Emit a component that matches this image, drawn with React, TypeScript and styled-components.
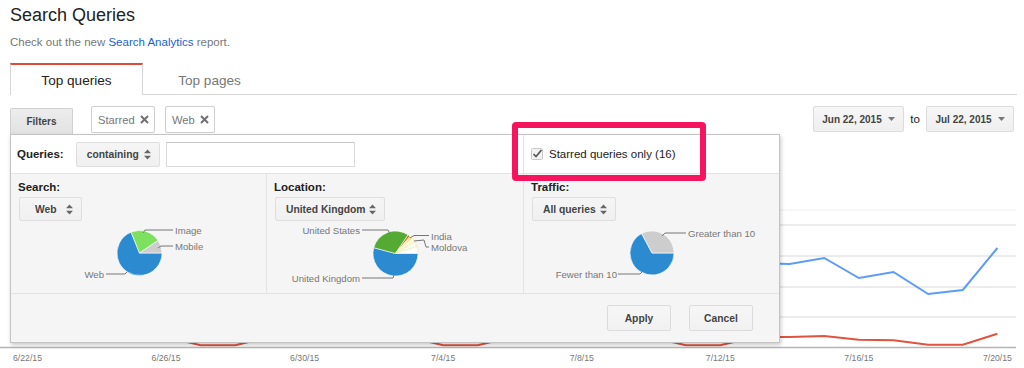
import React from "react";
import styled, { createGlobalStyle } from "styled-components";

const GlobalStyle = createGlobalStyle`
  body {
    margin: 0;
    background: #fff;
    font-family: "Liberation Sans", Arial, sans-serif;
    color: #222;
  }
`;

type Slice = { from: number; to: number; fill: string; stroke?: string };
type Callout = { points: string; text: string; x: number; y: number; anchor?: "start" | "end" };
type PieSpec = { cx: number; cy: number; r: number; slices: Slice[]; callouts: Callout[] };

// angles are degrees clockwise from 12 o'clock
const slicePath = (cx: number, cy: number, r: number, a0: number, a1: number) => {
  const pt = (a: number) => [cx + r * Math.sin((a * Math.PI) / 180), cy - r * Math.cos((a * Math.PI) / 180)];
  let sweep = a1 - a0;
  if (sweep < 0) sweep += 360;
  const [x0, y0] = pt(a0);
  const [x1, y1] = pt(a1);
  return `M${cx} ${cy} L${x0} ${y0} A${r} ${r} 0 ${sweep > 180 ? 1 : 0} 1 ${x1} ${y1} Z`;
};

const BLUE = "#2c8ad1";

const searchPie: PieSpec = {
  cx: 139.5,
  cy: 253,
  r: 22.5,
  slices: [
    { from: 90, to: 338, fill: BLUE },
    { from: 338, to: 56, fill: "#7de05f" },
    { from: 56, to: 90, fill: "#cdcdcd" },
  ],
  callouts: [
    { points: "143,233 145,230 173,230", text: "Image", x: 175, y: 233.5 },
    { points: "158,248 161,246 173,246", text: "Mobile", x: 175, y: 249.5 },
    { points: "106,274 125,274 127,272", text: "Web", x: 104, y: 277.5, anchor: "end" },
  ],
};

const locationPie: PieSpec = {
  cx: 395.5,
  cy: 253.5,
  r: 22.5,
  slices: [
    { from: 90, to: 285, fill: BLUE },
    { from: 285, to: 34, fill: "#55aa33" },
    { from: 34, to: 40, fill: "#b4761b" },
    { from: 40, to: 43, fill: "#e3a32c" },
    { from: 43, to: 47, fill: "#f5dc72" },
    { from: 47, to: 58, fill: "#fffbe3", stroke: "#f1e6a6" },
    { from: 58, to: 72, fill: "#fdfdf6", stroke: "#f1e6a6" },
    { from: 72, to: 90, fill: "#ffffff", stroke: "#f1e6a6" },
  ],
  callouts: [
    { points: "362,230 388,230 390,234", text: "United States", x: 360, y: 233.5, anchor: "end" },
    { points: "410,238 414,235.5 429,235.5", text: "India", x: 431, y: 239.5 },
    { points: "414,241 424,240 426,247 429,247", text: "Moldova", x: 431, y: 250.5 },
    { points: "362,278 393,278 394,275", text: "United Kingdom", x: 360, y: 281.5, anchor: "end" },
  ],
};

const trafficPie: PieSpec = {
  cx: 652,
  cy: 253,
  r: 22,
  slices: [
    { from: 90, to: 332, fill: BLUE },
    { from: 332, to: 90, fill: "#cdcdcd" },
  ],
  callouts: [
    { points: "662,236 665,233 686,233", text: "Greater than 10", x: 688, y: 236.5 },
    { points: "618,274 640,274 642,272", text: "Fewer than 10", x: 617, y: 277.5, anchor: "end" },
  ],
};

const sections = [
  { label: "Search:", value: "Web", width: 63, left: 11, colWidth: 255, pie: searchPie },
  { label: "Location:", value: "United Kingdom", width: 110, left: 267, colWidth: 256, pie: locationPie },
  { label: "Traffic:", value: "All queries", width: 84, left: 524, colWidth: 255, pie: trafficPie },
];

// chart data, one value per day from 6/22 to 7/20
const clicks = [268, 264, 259, 262, 256, 291, 294, 267, 261, 258, 264, 262, 289, 292, 263, 259, 256, 261, 265, 293, 290, 262, 263, 257, 277, 271, 293, 289, 247];
const impressions = [336, 335, 336, 337, 336, 344.2, 344.2, 336, 335, 336, 337, 336, 344.2, 344.2, 336, 335, 336, 337, 336, 344.2, 344.2, 336, 336, 335, 338.7, 339.3, 343.7, 343.7, 332.7];
const dayX = (i: number) => 27.5 + i * 34.64;
const dateLabels = ["6/22/15", "6/26/15", "6/30/15", "7/4/15", "7/8/15", "7/12/15", "7/16/15", "7/20/15"];

const Page = styled.div`
  position: relative;
  width: 1024px;
  height: 368px;
  overflow: hidden;
  box-sizing: border-box;
  padding: 4px 10px 0 10px;
`;

const Title = styled.h1`
  margin: 0;
  font-size: 18px;
  line-height: 22px;
  font-weight: normal;
  color: #222;
`;

const Intro = styled.p`
  margin: 9px 0 0;
  font-size: 11.5px;
  line-height: 14px;
  color: #777;

  a {
    color: #1a5fd0;
    text-decoration: none;
  }
`;

const TabBar = styled.div`
  display: flex;
  margin-top: 14px;
  width: 1007px;
  height: 31px;
  border-bottom: 1px solid #d6d6d6;
`;

const Tab = styled.div<{ $active?: boolean }>`
  box-sizing: border-box;
  width: 133px;
  height: ${({ $active }) => ($active ? "32px" : "31px")};
  display: flex;
  align-items: center;
  justify-content: center;
  font-size: 13.6px;
  color: ${({ $active }) => ($active ? "#222" : "#777")};
  background: #fff;
  border: 1px solid ${({ $active }) => ($active ? "#d6d6d6" : "transparent")};
  border-top: 2px solid ${({ $active }) => ($active ? "#dd4b39" : "transparent")};
  border-bottom: none;
  padding-top: 1px;
`;

const Toolbar = styled.div`
  display: flex;
  align-items: flex-start;
  margin-top: 11px;
  width: 1004px;
`;

const FilterButton = styled.div`
  box-sizing: border-box;
  width: 63px;
  height: 26px;
  margin-top: 2px;
  display: flex;
  align-items: center;
  justify-content: center;
  font-size: 10px;
  font-weight: bold;
  color: #444;
  background: linear-gradient(#ededed, #e2e2e2);
  border: 1px solid #d0d0d0;
  border-bottom: none;
  border-radius: 2px 2px 0 0;
`;

const Chip = styled.div<{ $width: number; $gap: number }>`
  box-sizing: border-box;
  width: ${({ $width }) => $width}px;
  height: 27px;
  margin-left: ${({ $gap }) => $gap}px;
  display: flex;
  align-items: center;
  gap: 5px;
  padding-left: 6px;
  font-size: 11.2px;
  color: #777;
  background: #fff;
  border: 1px solid #cfcfcf;
  border-radius: 2px;
`;

const DateGroup = styled.div`
  margin-left: auto;
  display: flex;
  align-items: center;
`;

const DateButton = styled.div<{ $width: number }>`
  box-sizing: border-box;
  width: ${({ $width }) => $width}px;
  height: 26px;
  display: flex;
  align-items: center;
  justify-content: center;
  gap: 6px;
  font-size: 10px;
  font-weight: bold;
  color: #444;
  background: linear-gradient(#f6f6f6, #efefef);
  border: 1px solid #dcdcdc;
  border-radius: 2px;
`;

const ToText = styled.span`
  width: 22px;
  text-align: center;
  font-size: 11.5px;
  color: #222;
`;

const Chart = styled.svg`
  display: block;
  margin: 0 0 0 -10px;
`;

const FilterPanel = styled.div`
  position: absolute;
  left: 10px;
  top: 134px;
  width: 770px;
  height: 209px;
  box-sizing: border-box;
  display: flex;
  flex-direction: column;
  background: #f5f5f5;
  border: 1px solid #c4c4c4;
  box-shadow: 1px 2px 4px rgba(0, 0, 0, 0.22);
`;

const QueriesRow = styled.div`
  height: 38px;
  display: flex;
  background: #fff;
  border-bottom: 1px solid #e3e3e3;
`;

const QueriesLeft = styled.div`
  box-sizing: border-box;
  width: 513px;
  display: flex;
  align-items: center;
  padding-left: 6px;
  border-right: 1px solid #e3e3e3;
`;

const QueriesRight = styled.div`
  display: flex;
  align-items: center;
  gap: 6px;
  padding-left: 7px;
  font-size: 11.5px;
  color: #222;
`;

const FieldLabel = styled.div<{ $indent?: number }>`
  font-size: 11.5px;
  line-height: 14px;
  font-weight: bold;
  color: #222;
  margin-left: ${({ $indent }) => $indent ?? 0}px;
`;

const Select = styled.div<{ $width: number; $indent?: number }>`
  box-sizing: border-box;
  width: ${({ $width }) => $width}px;
  height: 25px;
  margin-left: ${({ $indent }) => $indent ?? 0}px;
  display: flex;
  align-items: center;
  justify-content: space-between;
  padding: 0 8px 0 10px;
  font-size: 10.3px;
  font-weight: bold;
  color: #444;
  background: linear-gradient(#f5f5f5, #f0f0f0);
  border: 1px solid #dedede;
  border-radius: 2px;
`;

const TextInput = styled.div`
  box-sizing: border-box;
  width: 189px;
  height: 25px;
  margin-left: 6px;
  background: #fff;
  border: 1px solid #d9d9d9;
  border-top-color: #c6c6c6;
`;

const SectionRow = styled.div`
  height: 119px;
  display: grid;
  grid-template-columns: 256px 257px 1fr;
  border-bottom: 1px solid #e3e3e3;
`;

const Section = styled.div`
  box-sizing: border-box;
  padding-top: 6px;
  border-right: 1px solid #e3e3e3;
  display: flex;
  flex-direction: column;
  align-items: flex-start;

  &:last-child {
    border-right: none;
  }
`;

const SectionSelect = styled(Select)<{ $pad: number }>`
  margin-top: 3px;
  height: 24px;
  padding-left: ${({ $pad }) => $pad}px;
`;

const PieSvg = styled.svg`
  display: block;
  margin-top: 1px;
`;

const Footer = styled.div`
  flex: 1;
  display: flex;
  align-items: center;
  justify-content: flex-end;
  gap: 18px;
  padding-right: 26px;
`;

const ActionButton = styled.div`
  box-sizing: border-box;
  width: 64px;
  height: 26px;
  display: flex;
  align-items: center;
  justify-content: center;
  font-size: 10.3px;
  font-weight: bold;
  color: #444;
  background: linear-gradient(#f6f6f6, #f1f1f1);
  border: 1px solid #dcdcdc;
  border-radius: 2px;
`;

const Highlight = styled.div`
  position: absolute;
  left: 512px;
  top: 122px;
  width: 194px;
  height: 59px;
  box-sizing: border-box;
  border: 6px solid #f7145e;
  border-radius: 4px;
`;

const UpDown = () => (
  <svg width="7" height="11" viewBox="0 0 7 11">
    <path d="M0 4.2 L3.5 0.5 L7 4.2 Z M0 6.8 L3.5 10.5 L7 6.8 Z" fill="#666" />
  </svg>
);

const Caret = () => (
  <svg width="7" height="4" viewBox="0 0 7 4">
    <path d="M0 0 L7 0 L3.5 4 Z" fill="#777" />
  </svg>
);

const Cross = () => (
  <svg width="9" height="9" viewBox="0 0 9 9">
    <path d="M1 1 L8 8 M8 1 L1 8" stroke="#707070" strokeWidth="2" />
  </svg>
);

const CheckBox = () => (
  <svg width="12" height="12" viewBox="0 0 12 12">
    <rect x="0.5" y="0.5" width="11" height="11" rx="1" fill="#f3f3f3" stroke="#c8c8c8" />
    <path d="M2.5 6 L5 8.6 L10.5 2" fill="none" stroke="#555" strokeWidth="1.6" />
  </svg>
);

const Pie: React.FC<{ spec: PieSpec; left: number; width: number }> = ({ spec, left, width }) => (
  <PieSvg width={width} height={70} viewBox={`${left} 222 ${width} 70`}>
    {spec.slices.map((s, i) => (
      <path key={i} d={slicePath(spec.cx, spec.cy, spec.r, s.from, s.to)} fill={s.fill} stroke={s.stroke ?? "#fff"} strokeWidth={0.6} />
    ))}
    {spec.callouts.map((c) => (
      <g key={c.text}>
        <polyline points={c.points} fill="none" stroke="#777" strokeWidth={1} />
        <text x={c.x} y={c.y} fontSize="9.6" fill="#777" textAnchor={c.anchor ?? "start"} fontFamily="'Liberation Sans', Arial, sans-serif">
          {c.text}
        </text>
      </g>
    ))}
  </PieSvg>
);

const line = (values: number[]) => values.map((v, i) => `${dayX(i).toFixed(1)},${v}`).join(" ");

const TrendChart = () => (
  <Chart width={1024} height={235} viewBox="0 133 1024 235">
    <line x1={10} x2={1016} y1={209} y2={209} stroke="#efefef" strokeWidth={1} />
    {[224, 255, 286, 316].map((y) => (
      <line key={y} x1={10} x2={1016} y1={y} y2={y} stroke="#e6e6e6" strokeWidth={1.5} />
    ))}
    <polyline points={line(clicks)} fill="none" stroke="#5b9cf6" strokeWidth={2} />
    <polyline points={line(impressions)} fill="none" stroke="#e0533f" strokeWidth={2} />
    <line x1={0} x2={1016} y1={346.5} y2={346.5} stroke="#b5b5b5" strokeWidth={1.5} />
    {dateLabels.map((d, i) => (
      <text key={d} x={dayX(i * 4)} y={360} fontSize="8.7" fill="#777" textAnchor="middle" fontFamily="'Liberation Sans', Arial, sans-serif">
        {d}
      </text>
    ))}
  </Chart>
);

export default function App() {
  return (
    <>
      <GlobalStyle />
      <Page>
        <Title>Search Queries</Title>
        <Intro>
          Check out the new <a href="#">Search Analytics</a> report.
        </Intro>
        <TabBar>
          <Tab $active>Top queries</Tab>
          <Tab>Top pages</Tab>
        </TabBar>
        <Toolbar>
          <FilterButton>Filters</FilterButton>
          <Chip $width={64} $gap={18}>
            Starred <Cross />
          </Chip>
          <Chip $width={50} $gap={10}>
            Web <Cross />
          </Chip>
          <DateGroup>
            <DateButton $width={91}>
              Jun 22, 2015 <Caret />
            </DateButton>
            <ToText>to</ToText>
            <DateButton $width={88}>
              Jul 22, 2015 <Caret />
            </DateButton>
          </DateGroup>
        </Toolbar>
        <TrendChart />

        <FilterPanel>
          <QueriesRow>
            <QueriesLeft>
              <FieldLabel>Queries:</FieldLabel>
              <Select $width={84} $indent={12}>
                containing <UpDown />
              </Select>
              <TextInput />
            </QueriesLeft>
            <QueriesRight>
              <CheckBox />
              Starred queries only (16)
            </QueriesRight>
          </QueriesRow>
          <SectionRow>
            {sections.map((s) => (
              <Section key={s.label}>
                <FieldLabel $indent={7}>{s.label}</FieldLabel>
                <SectionSelect $width={s.width} $indent={8} $pad={s.value === "Web" ? 15 : 10}>
                  {s.value} <UpDown />
                </SectionSelect>
                <Pie spec={s.pie} left={s.left} width={s.colWidth} />
              </Section>
            ))}
          </SectionRow>
          <Footer>
            <ActionButton>Apply</ActionButton>
            <ActionButton>Cancel</ActionButton>
          </Footer>
        </FilterPanel>
        <Highlight />
      </Page>
    </>
  );
}
